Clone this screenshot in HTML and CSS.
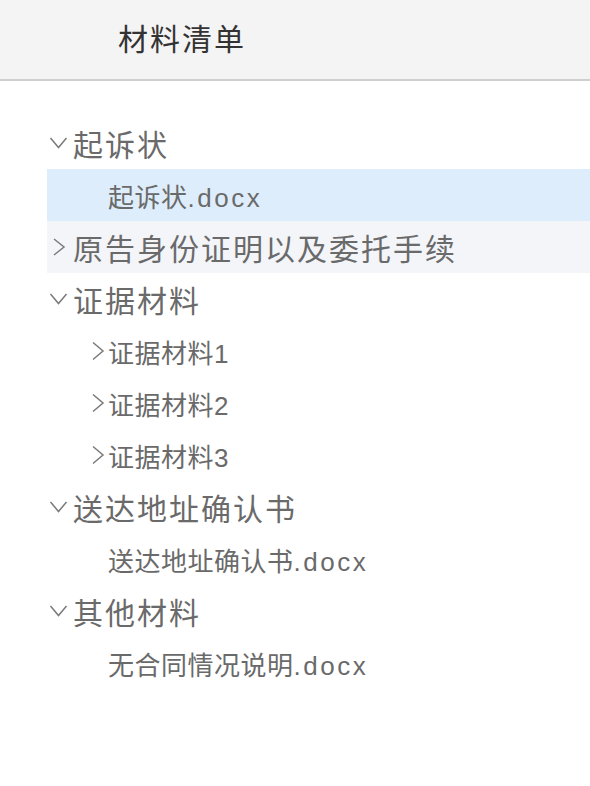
FILE: index.html
```html
<!DOCTYPE html>
<html lang="zh">
<head>
<meta charset="utf-8">
<title>材料清单</title>
<link rel="stylesheet" href="styles.css">
</head>
<body>
<header class="header"><h1 class="title">材料清单</h1></header>
<ul class="tree">
  <li class="row l1"><svg class="chev" viewBox="0 0 20 20"><path d="M1.5 5 L9.5 14.5 L17.5 5"/></svg><span>起诉状</span></li>
  <li class="row l2 selected"><span class="leaf"></span><span>起诉状<span class="ext">.docx</span></span></li>
  <li class="row l1 hover"><svg class="chev" viewBox="0 0 20 20"><path d="M5 2 L15 10 L5 18"/></svg><span>原告身份证明以及委托手续</span></li>
  <li class="row l1"><svg class="chev" viewBox="0 0 20 20"><path d="M1.5 5 L9.5 14.5 L17.5 5"/></svg><span>证据材料</span></li>
  <li class="row l2"><svg class="chev" viewBox="0 0 20 20"><path d="M5 1.5 L15 10 L5 18.5"/></svg><span>证据材料1</span></li>
  <li class="row l2"><svg class="chev" viewBox="0 0 20 20"><path d="M5 1.5 L15 10 L5 18.5"/></svg><span>证据材料2</span></li>
  <li class="row l2"><svg class="chev" viewBox="0 0 20 20"><path d="M5 1.5 L15 10 L5 18.5"/></svg><span>证据材料3</span></li>
  <li class="row l1"><svg class="chev" viewBox="0 0 20 20"><path d="M1.5 5 L9.5 14.5 L17.5 5"/></svg><span>送达地址确认书</span></li>
  <li class="row l2"><span class="leaf"></span><span>送达地址确认书<span class="ext">.docx</span></span></li>
  <li class="row l1"><svg class="chev" viewBox="0 0 20 20"><path d="M1.5 5 L9.5 14.5 L17.5 5"/></svg><span>其他材料</span></li>
  <li class="row l2"><span class="leaf"></span><span>无合同情况说明<span class="ext">.docx</span></span></li>
</ul>
</body>
</html>
```
FILE: styles.css
```css
html, body {
  margin: 0;
  padding: 0;
  background: #ffffff;
  font-family: "Liberation Sans", "Noto Sans CJK SC", sans-serif;
}
.header {
  height: 79px;
  background: #f4f4f4;
  border-bottom: 2px solid #cfcfcf;
  display: flex;
  align-items: center;
  padding-left: 118px;
}
.title {
  margin: 0;
  font-size: 30px;
  font-weight: 400;
  letter-spacing: 2px;
  color: #333333;
  line-height: 1;
}
.tree {
  list-style: none;
  margin: 36px 0 0 47px;
  padding: 0;
}
.row {
  height: 52px;
  display: flex;
  align-items: center;
  color: #6a6a6a;
}
.row.l1 {
  font-size: 30px;
  letter-spacing: 2px;
  padding-left: 2px;
  gap: 4px;
}
.row.l2 {
  font-size: 26px;
  letter-spacing: 0.5px;
  padding-left: 41px;
}
.ext {
  letter-spacing: 2.5px;
}
.chev {
  width: 20px;
  height: 20px;
  flex: none;
  fill: none;
  stroke: #7a7a7a;
  stroke-width: 1.5;
}
.leaf {
  width: 20px;
  flex: none;
}
.selected {
  background: #deedfb;
}
.hover {
  background: #f3f5f9;
}
```
